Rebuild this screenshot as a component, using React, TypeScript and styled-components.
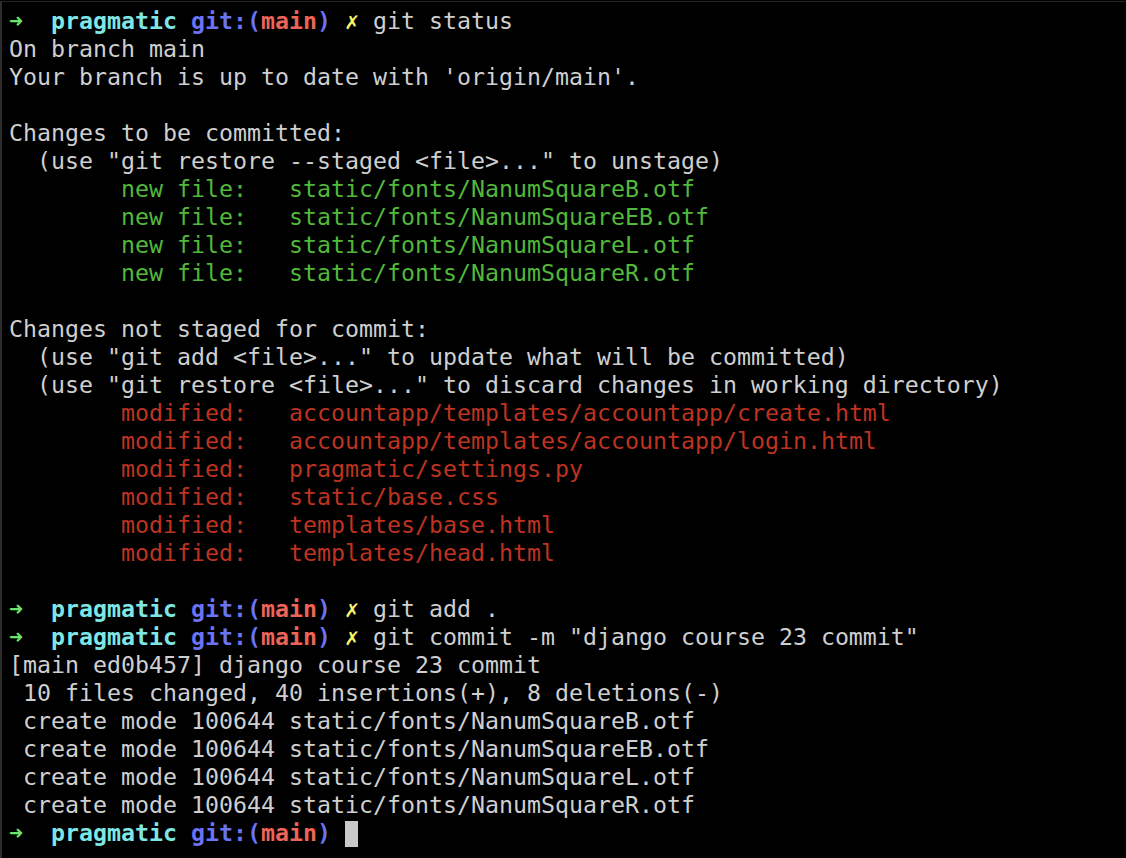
import React from "react";
import styled, { createGlobalStyle } from "styled-components";

const Global = createGlobalStyle`
  html, body {
    margin: 0;
    padding: 0;
    background: #000;
  }
  body {
    width: 1126px;
    height: 858px;
    overflow: hidden;
  }
`;

const Terminal = styled.div`
  box-sizing: border-box;
  width: 1126px;
  height: 857px;
  margin-top: 1px;
  background: #000;
  border-top: 1px solid #252525;
  border-left: 2px solid #2c2c2c;
  padding: 5px 0 0 7px;
  font-family: "DejaVu Sans Mono", "Liberation Mono", monospace;
  font-size: 23.25px;
  line-height: 28px;
  color: #cfcfcf;
`;

const Line = styled.div`
  white-space: pre;
  height: 28px;
`;

type Tone = "arrow" | "dir" | "git" | "branch" | "dirty" | "added" | "changed";

const colors: Record<Tone, string> = {
  arrow: "#6fe46d",
  dir: "#7fe6e6",
  git: "#6a73f2",
  branch: "#ee6457",
  dirty: "#f4f36b",
  added: "#52b83a",
  changed: "#be3320",
};

const Span = styled.span<{ $tone: Tone; $bold?: boolean }>`
  color: ${(p) => colors[p.$tone]};
  font-weight: ${(p) => (p.$bold ? 700 : 400)};
`;

const Glyph = styled.span<{ $tone: Tone; $bold?: boolean }>`
  display: inline-block;
  width: 1ch;
  text-align: center;
  color: ${(p) => colors[p.$tone]};
  font-weight: ${(p) => (p.$bold ? 700 : 400)};
`;

const Cursor = styled.span`
  display: inline-block;
  width: 13px;
  height: 26px;
  background: #c9c9c9;
  vertical-align: -6px;
`;

function Prompt({ cmd, dirty = true, cursor = false }: { cmd?: string; dirty?: boolean; cursor?: boolean }) {
  return (
    <Line>
      <Glyph $tone="arrow" $bold>➜</Glyph>
      {"  "}
      <Span $tone="dir" $bold>pragmatic</Span>{" "}
      <Span $tone="git" $bold>git:(</Span>
      <Span $tone="branch" $bold>main</Span>
      <Span $tone="git" $bold>)</Span>{" "}
      {dirty && (
        <>
          <Glyph $tone="dirty" $bold>✗</Glyph>{" "}
        </>
      )}
      {cmd}
      {cursor && <Cursor />}
    </Line>
  );
}

const T = ({ children }: { children?: React.ReactNode }) => <Line>{children ?? " "}</Line>;

const Status = ({ label, path, tone }: { label: string; path: string; tone: Tone }) => (
  <Line>
    {"        "}
    <Span $tone={tone}>{label}</Span>
    <Span $tone={tone}>{path}</Span>
  </Line>
);

export default function App() {
  return (
    <>
      <Global />
      <Terminal>
        <Prompt cmd="git status" />
        <T>On branch main</T>
        <T>Your branch is up to date with 'origin/main'.</T>
        <T />
        <T>Changes to be committed:</T>
        <T>{'  (use "git restore --staged <file>..." to unstage)'}</T>
        <Status tone="added" label="new file:   " path="static/fonts/NanumSquareB.otf" />
        <Status tone="added" label="new file:   " path="static/fonts/NanumSquareEB.otf" />
        <Status tone="added" label="new file:   " path="static/fonts/NanumSquareL.otf" />
        <Status tone="added" label="new file:   " path="static/fonts/NanumSquareR.otf" />
        <T />
        <T>Changes not staged for commit:</T>
        <T>{'  (use "git add <file>..." to update what will be committed)'}</T>
        <T>{'  (use "git restore <file>..." to discard changes in working directory)'}</T>
        <Status tone="changed" label="modified:   " path="accountapp/templates/accountapp/create.html" />
        <Status tone="changed" label="modified:   " path="accountapp/templates/accountapp/login.html" />
        <Status tone="changed" label="modified:   " path="pragmatic/settings.py" />
        <Status tone="changed" label="modified:   " path="static/base.css" />
        <Status tone="changed" label="modified:   " path="templates/base.html" />
        <Status tone="changed" label="modified:   " path="templates/head.html" />
        <T />
        <Prompt cmd="git add ." />
        <Prompt cmd={'git commit -m "django course 23 commit"'} />
        <T>[main ed0b457] django course 23 commit</T>
        <T> 10 files changed, 40 insertions(+), 8 deletions(-)</T>
        <T> create mode 100644 static/fonts/NanumSquareB.otf</T>
        <T> create mode 100644 static/fonts/NanumSquareEB.otf</T>
        <T> create mode 100644 static/fonts/NanumSquareL.otf</T>
        <T> create mode 100644 static/fonts/NanumSquareR.otf</T>
        <Prompt dirty={false} cursor />
      </Terminal>
    </>
  );
}
